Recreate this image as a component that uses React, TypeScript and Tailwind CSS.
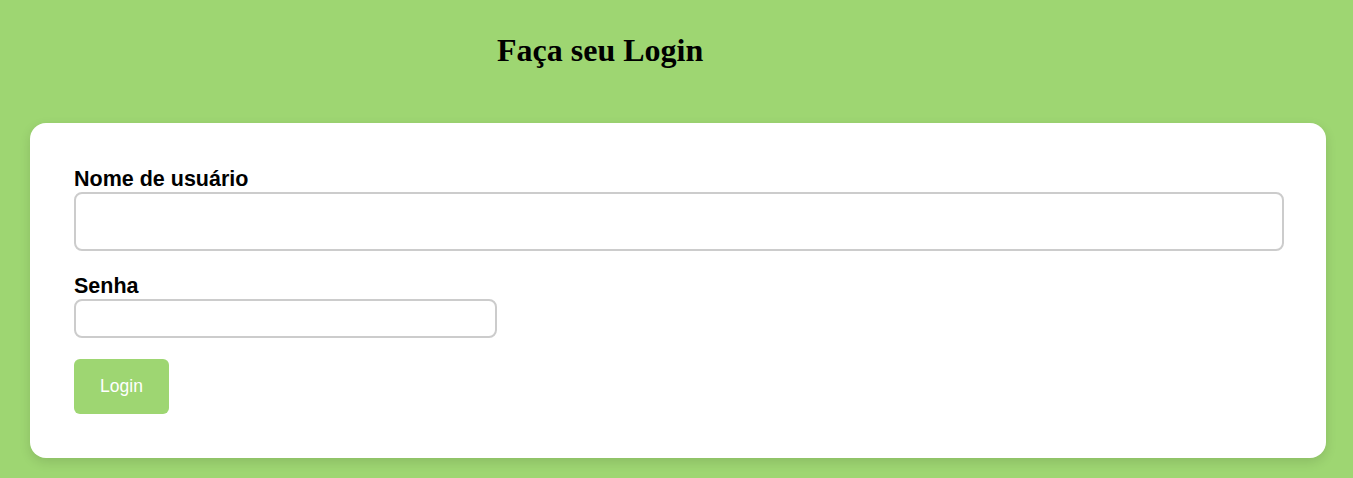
import React from 'react';

export default function App() {
  return (
    <div className="min-h-[478px] bg-[#9ed672] pt-[21px] pb-[20px]" style={{ fontFamily: '"Liberation Sans", Arial, sans-serif' }}>
      {/* Title */}
      <h1
        className="m-0 ml-[497px] text-[32px] font-bold leading-[58px] text-black"
        style={{ fontFamily: '"Liberation Serif", "Times New Roman", serif' }}
      >
        Faça seu Login
      </h1>

      {/* Card */}
      <div className="mt-[44px] ml-[30px] w-[1296px] rounded-[16px] bg-white pl-[44px] pr-[42px] pt-[44px] pb-[44px] shadow-[0_4px_12px_rgba(0,0,0,0.12)]">
        <form className="flex flex-col" onSubmit={(e) => e.preventDefault()}>
          <label className="block text-[21.5px] font-bold leading-[25px] text-black">Nome de usuário</label>
          <input
            type="text"
            className="h-[59px] w-full rounded-[8px] border-2 border-[#cccccc] bg-white px-2 outline-none"
          />

          <label className="mt-[23px] block text-[21.5px] font-bold leading-[25px] text-black">Senha</label>
          <input
            type="password"
            className="h-[39px] w-[423px] rounded-[8px] border-2 border-[#cccccc] bg-white px-2 outline-none"
          />

          <button
            type="submit"
            className="mt-[21px] h-[55px] w-[95px] rounded-[6px] bg-[#9ed672] text-[17.5px] text-white"
          >
            Login
          </button>
        </form>
      </div>
    </div>
  );
}
